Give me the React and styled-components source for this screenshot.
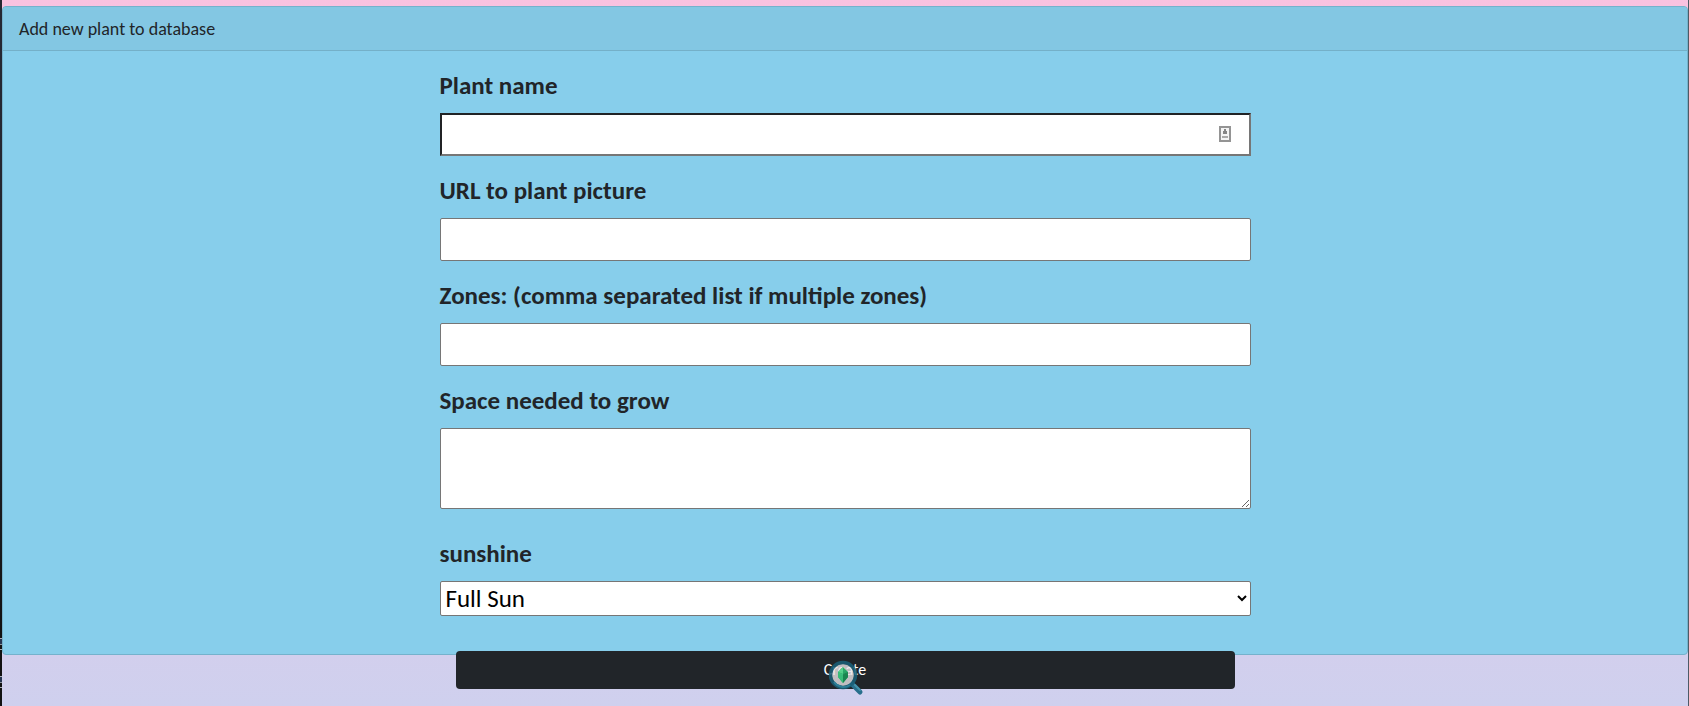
import React from 'react';
import styled, { createGlobalStyle } from 'styled-components';

const GlobalStyle = createGlobalStyle`
  *, *::before, *::after { box-sizing: border-box; }
  body {
    margin: 0;
    color: #212529;
    font-family: Calibri, Carlito, Lato, sans-serif;
    font-size: 18px;
    line-height: 24px;
  }
`;

const Page = styled.div`
  display: flex;
  min-height: 100vh;
  background: linear-gradient(180deg, #f9c2e0 0%, #cfd0ee 100%);
`;

const LeftEdge = styled.div`
  display: flex;
  flex-direction: column;
  justify-content: flex-end;
  gap: 26px;
  width: 2px;
  padding-bottom: 18px;
  background: linear-gradient(180deg, #262833 0%, #22242c 50%, #121212 90%);
`;

const EdgeMark = styled.span`
  height: 12px;
  border: solid #a9adb5;
  border-width: 1px 0;
  background: linear-gradient(#26344f 50%, #8d949c 50% 60%, #121212 60%);
`;

const RightEdge = styled.div`
  width: 1px;
  background: #4d5a66;
`;

const Main = styled.form`
  flex: 1;
  padding-top: 6px;
`;

const Card = styled.section`
  border: 1px solid #74b2cc;
  border-radius: 4px;
  background: #87ceeb;
`;

const CardHeader = styled.header`
  padding: 10px 16px 9px;
  border-bottom: 1px solid #74b0c8;
  border-radius: 3px 3px 0 0;
  background: #83c7e3;
`;

const CardBody = styled.div`
  display: flex;
  flex-direction: column;
  gap: 16px;
  width: calc(50% - 31px);
  margin: 0 auto;
  padding: 16px 0 38px;
`;

const Field = styled.div`
  display: flex;
  flex-direction: column;
  gap: 8px;
  position: relative;
  margin-top: ${(p) => (p.$spaced ? '10px' : '0')};
`;

const Label = styled.label`
  font-size: 25px;
  font-weight: 700;
  line-height: 38px;
`;

const TextInput = styled.input`
  width: 100%;
  height: 43px;
  padding: 1px 4px;
  border: ${(p) => (p.$inset ? '2px solid' : '1px solid')};
  border-color: ${(p) => (p.$inset ? '#212325 #767676 #767676 #212325' : '#767676')};
  border-radius: ${(p) => (p.$inset ? '0' : '2px')};
  background: #fff;
  font: inherit;
  font-size: 25px;
  outline: none;
`;

const TextArea = styled.textarea`
  display: block;
  width: 100%;
  height: 81px;
  padding: 2px 4px;
  border: 1px solid #767676;
  border-radius: 2px;
  background: #fff;
  font: inherit;
  font-size: 25px;
  resize: vertical;
`;

const Select = styled.select`
  width: 100%;
  height: 35px;
  padding: 0 1px;
  border: 1px solid #767676;
  border-radius: 2px;
  background: #fff;
  color: #000;
  font: inherit;
  font-size: 25px;
`;

const AutofillIcon = styled.svg`
  position: absolute;
  right: 20px;
  bottom: 14px;
`;

const SubmitButton = styled.button`
  display: block;
  position: relative;
  width: calc(50% - 64px);
  height: 38px;
  margin: -4px auto 0;
  padding: 0;
  border: 0;
  border-radius: 4px;
  background: #212529;
  color: #fff;
  font: inherit;
  font-size: 16px;
`;

const Lens = styled.svg`
  position: absolute;
  top: 7px;
  left: calc(50% - 18px);
`;

function ContactGlyph() {
  return (
    <AutofillIcon width="12" height="16" viewBox="0 0 12 16" aria-hidden="true">
      <rect x="1" y="1" width="10" height="14" fill="#f4f4f4" stroke="#949494" strokeWidth="2" />
      <path d="M5 3h2v2h1v3H4V5h1z" fill="#858585" />
      <path d="M3 10h6v2H3z" fill="#aaa" />
    </AutofillIcon>
  );
}

function LensGlyph() {
  return (
    <Lens width="38" height="38" viewBox="0 0 38 38" aria-hidden="true">
      <path d="M25 26L33 34" stroke="#286f8c" strokeWidth="5" strokeLinecap="round" />
      <path d="M28 27L33 32" stroke="#4492aa" strokeWidth="2" strokeLinecap="round" />
      <circle cx="16" cy="17" r="11" fill="#e9e5e7" fillOpacity="0.8" />
      <circle cx="16" cy="17" r="12.500" fill="none" stroke="#195f76" strokeOpacity="0.88" strokeWidth="3.500" />
      <path d="M7 24A11.500 11.500 0 0 0 23 27" fill="none" stroke="#2d7e96" strokeWidth="2" />
      <g opacity="0.9">
        <path d="M16 9L21 14V19L16 25L11 19V14Z" fill="#16a45c" />
        <path d="M16 9L11 14L16 16Z" fill="#48d184" />
        <path d="M16 16L21 14V19L16 25Z" fill="#078044" />
        <path d="M11 14L16 16V25L11 19Z" fill="#29bc70" />
      </g>
    </Lens>
  );
}

export default function App() {
  return (
    <>
      <GlobalStyle />
      <Page>
        <LeftEdge aria-hidden="true">
          <EdgeMark />
          <EdgeMark />
        </LeftEdge>
        <Main onSubmit={(e) => e.preventDefault()}>
          <Card>
            <CardHeader>Add new plant to database</CardHeader>
            <CardBody>
              <Field>
                <Label htmlFor="name">Plant name</Label>
                <TextInput id="name" type="text" $inset />
                <ContactGlyph />
              </Field>
              <Field>
                <Label htmlFor="picture">URL to plant picture</Label>
                <TextInput id="picture" type="text" />
              </Field>
              <Field>
                <Label htmlFor="zones">Zones: (comma separated list if multiple zones)</Label>
                <TextInput id="zones" type="text" />
              </Field>
              <Field>
                <Label htmlFor="space">Space needed to grow</Label>
                <TextArea id="space" />
              </Field>
              <Field $spaced>
                <Label htmlFor="sunshine">sunshine</Label>
                <Select id="sunshine" defaultValue="Full Sun">
                  <option>Full Sun</option>
                  <option>Partial Sun</option>
                  <option>Shade</option>
                </Select>
              </Field>
            </CardBody>
          </Card>
          <SubmitButton type="submit">
            Create
            <LensGlyph />
          </SubmitButton>
        </Main>
        <RightEdge />
      </Page>
    </>
  );
}
